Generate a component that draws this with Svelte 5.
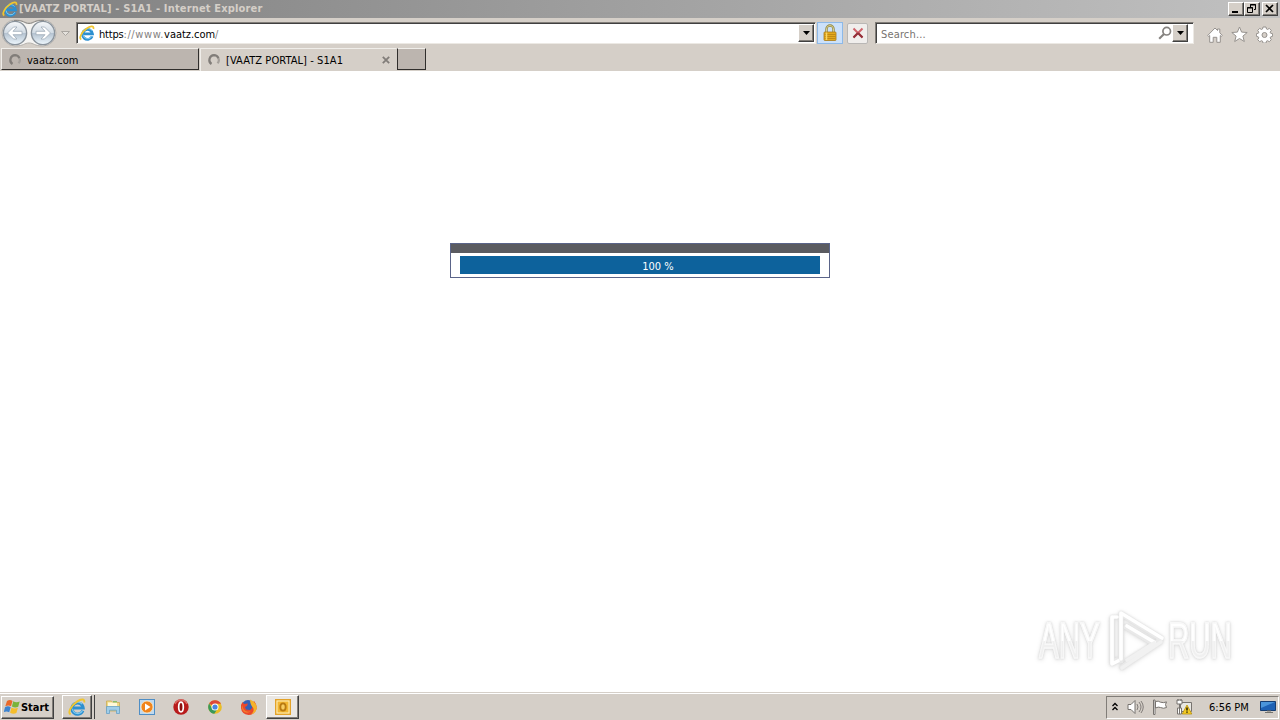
<script>
  const url = "https://www.vaatz.com/";
  const progress = 100;
  const time = "6:56 PM";
</script>

{#snippet ieLogo(size)}
  <svg class="ie" width={size} height={size} viewBox="0 0 16 16">
    <path d="M13.2 11.2A5 5 0 1 1 13.5 8.800H4.800" fill="none" stroke="#2c8fd0" stroke-width="2.700" />
    <path d="M12.900 11.200A4.700 4.700 0 0 1 4 9.500M4.500 6.500a4.700 4.700 0 0 1 8-1" fill="none" stroke="#7fc9ee" stroke-width="1" />
    <path d="M2.300 14.600C-.7 13 3 6.600 8 3.200c3.600-2.500 7.200-2.600 6.400.8" fill="none" stroke="#f0c52f" stroke-width="1.700" />
  </svg>
{/snippet}

{#snippet spinner()}
  <svg class="spinner" width="14" height="14" viewBox="0 0 14 14">
    <path d="M11 4.500A4.800 4.800 0 0 1 10.500 10.300" fill="none" stroke="#a5a09b" stroke-width="2.200" />
    <path d="M4.500 11A4.800 4.800 0 0 1 7 2.200a4.800 4.800 0 0 1 4.400 2.900" fill="none" stroke="#817d79" stroke-width="2.200" />
  </svg>
{/snippet}

{#snippet arrow()}
  <svg width="7" height="4" viewBox="0 0 7 4"><path d="M0 0h7L3.5 4z" fill="#000" /></svg>
{/snippet}

<div class="screen">
  <header class="titlebar">
    {@render ieLogo(16)}
    <span class="title">[VAATZ PORTAL] - S1A1 - Internet Explorer</span>
    <div class="controls">
      <button class="raised" aria-label="Minimize">
        <svg width="12" height="10" viewBox="0 0 12 10"><path d="M2 8h6" stroke="#000" stroke-width="2" /></svg>
      </button>
      <button class="raised" aria-label="Restore">
        <svg width="12" height="10" viewBox="0 0 12 10" fill="none" stroke="#000">
          <path d="M4.5 3V.5h5v5H8M4 1h6M1.5 3.5h5v5h-5zM1 4h6" />
        </svg>
      </button>
      <button class="raised close" aria-label="Close">
        <svg width="12" height="10" viewBox="0 0 12 10"><path d="M2 1l7 7M9 1L2 8" stroke="#000" stroke-width="1.7" /></svg>
      </button>
    </div>
  </header>

  <nav class="toolbar">
    <svg class="history" width="76" height="30" viewBox="0 0 76 30">
      <defs>
        <linearGradient id="orb" x1="0" y1="0" x2="0" y2="1">
          <stop offset="0" stop-color="#f6f8fa" />
          <stop offset=".48" stop-color="#d2dbe4" />
          <stop offset=".52" stop-color="#b5c3d1" />
          <stop offset="1" stop-color="#eef7fd" />
        </linearGradient>
      </defs>
      <path d="M15 2C24 2 24 5 29 5s5-3 14-3a13 13 0 0 1 0 26c-9 0-9-3-14-3s-5 3-14 3A13 13 0 0 1 15 2" fill="#f5f4f2" stroke="#b5b1ac" />
      <path d="M14 2.500C24 2 24 5.500 29 5.500s5-3.500 15-3" fill="none" stroke="#8f8c88" />
      <circle cx="15" cy="15" r="11.6" fill="url(#orb)" stroke="#8a939c" stroke-width="1.4" />
      <circle cx="43" cy="15" r="11.6" fill="url(#orb)" stroke="#8a939c" stroke-width="1.4" />
      <g fill="#fff" stroke="#9eabb8" stroke-width=".8">
        <path d="M7.5 15l6-6h3.5l-4 4.3H22v3.4h-9l4 4.3h-3.5z" />
        <path d="M50.5 15l-6-6H41l4 4.3h-9v3.4h9L41 21h3.5z" />
      </g>
      <path d="M61.5 13.5h8l-4 4z" fill="#e5e2dd" stroke="#aaa6a1" />
    </svg>

    <div class="field address">
      {@render ieLogo(16)}
      <span class="url">
        <span class="scheme">https</span><span class="dim">{url.slice(5, 12)}</span><span class="host">{url.slice(12, -1)}</span><span class="dim">/</span>
      </span>
      <button class="raised drop" aria-label="Show address history">{@render arrow()}</button>
    </div>

    <button class="lock" aria-label="Security report">
      <svg width="16" height="18" viewBox="0 0 16 18">
        <path d="M4.5 8V5a3.5 3.5 0 0 1 7 0v3" fill="none" stroke="#8f8643" stroke-width="2.4" />
        <path d="M4.5 8V5a3.5 3.5 0 0 1 7 0v3" fill="none" stroke="#dfd698" stroke-width=".9" />
        <rect x="2" y="8" width="12" height="8.5" rx=".8" fill="#e4a91c" stroke="#a87a17" stroke-width=".8" />
        <path d="M2.5 10.5h11M2.5 12.5h11M2.5 14.5h11" stroke="#b88313" stroke-width=".8" />
        <path d="M4.5 8.5v7.5" stroke="#f9d765" stroke-width="1.5" />
      </svg>
    </button>
    <button class="stop" aria-label="Stop">
      <svg width="12" height="12" viewBox="0 0 12 12" fill="none">
        <path d="M1.5 1.5l9 9M10.5 1.5l-9 9" stroke="#d0646b" stroke-width="2" />
        <path d="M6 6l4.5 4.5M6 6l-4.5 4.5" stroke="#93303a" stroke-width="2" />
      </svg>
    </button>

    <div class="field search">
      <span class="placeholder">Search...</span>
      <svg width="14" height="14" viewBox="0 0 14 14" fill="none" stroke="#85827f">
        <circle cx="8.7" cy="5.2" r="3.8" stroke-width="1.7" />
        <path d="M6 8l-4.8 4.8" stroke-width="2.1" />
      </svg>
      <button class="raised drop" aria-label="Search options">{@render arrow()}</button>
    </div>

    <div class="tools">
      <svg width="16" height="16" viewBox="0 0 16 16" fill="#fff" stroke="#96928e">
        <path d="M.7 8.5L8 1l2.5 2.5V2h2.3v3.8l2.5 2.7-1 .9-1-.9v6.8H9.8v-5H6.2v5H2.7V8.5l-1 .9z" />
      </svg>
      <svg width="17" height="17" viewBox="0 0 17 17" fill="#fff" stroke="#96928e">
        <path d="M8.5 1l2.1 5.1 5.6.4-4.3 3.6 1.4 5.4-4.8-3-4.8 3 1.4-5.4L.8 6.5l5.6-.4z" />
      </svg>
      <svg width="17" height="17" viewBox="0 0 17 17" fill="#fff" stroke="#96928e">
        <path d="M7 1h3l.5 2 1 .5 1.8-1.1 2 2-1.1 1.8.4 1 2 .5v2.6l-2 .6-.4 1 1.1 1.8-2 2-1.8-1-1 .4-.5 2H7l-.5-2-1-.4-1.8 1-2-2 1.1-1.8-.4-1-2-.6V7.7l2-.5.4-1-1.1-1.8 2-2 1.8 1.1 1-.5z" />
        <circle cx="8.5" cy="9" r="2.5" fill="#d5cfc8" />
      </svg>
    </div>
  </nav>

  <div class="tabs">
    <div class="tab idle">{@render spinner()}<span class="tab-one">vaatz.com</span></div>
    <div class="tab active">
      {@render spinner()}
      <span class="tab-two">[VAATZ PORTAL] - S1A1</span>
      <svg class="tab-close" width="8" height="8" viewBox="0 0 8 8"><path d="M.8.8l6.4 6.4M7.2.8L.8 7.2" stroke="#817d79" stroke-width="1.8" /></svg>
    </div>
    <button class="tab new" aria-label="New tab"></button>
  </div>

  <main class="page">
    <div class="loader">
      <div class="loader-head"></div>
      <div class="track">
        <div class="bar" style="width:{progress}%"><span>{progress} %</span></div>
      </div>
    </div>

    <div class="watermark">
      <span class="any">ANY</span>
      <svg width="60" height="64" viewBox="0 0 60 64" fill="none" stroke-linejoin="round" stroke-linecap="round">
        <g stroke="#e9e9e9" stroke-width="5">
          <path d="M5 10v44l5-3M14 52V5l40 25-39 28" /><path d="M19 18l28 17" />
        </g>
        <g stroke="#fff" stroke-width="3.6">
          <path d="M10 8H5v47l6-3" /><path d="M14 50V4l41 25" /><path d="M20 17l27 16" />
        </g>
        <path d="M54 33L15 59M47 34L20 51" stroke="#f1f1f1" stroke-width="3.6" />
      </svg>
      <span class="run">RUN</span>
    </div>
  </main>

  <footer class="taskbar">
    <button class="raised start">
      <svg width="17" height="16" viewBox="0 0 17 16">
        <path d="M3 2q3-2 5.5 0L7 7.3Q4.500 5.500 1.300 7.300z" fill="#e9682a" />
        <path d="M9.300 2.300q3 1.700 6.400.2l-1.500 5.300q-3 1.500-6.300-.2z" fill="#79b33a" />
        <path d="M1 8.200q3-1.700 5.700 0L5.200 13.300Q2.700 11.700-.2 13z" fill="#3c83d0" />
        <path d="M7.500 8.500q3 1.700 6.400.2L12.400 14q-3 1.500-6.300-.2z" fill="#f5bd2b" />
      </svg>
      <span>Start</span>
    </button>

    <div class="apps">
      <div class="app group"><div class="raised slot">{@render ieLogo(18)}</div></div>
      <div class="app">
        <svg width="16" height="16" viewBox="0 0 16 16">
          <path d="M1.500 2h5l1 1.500h7V12h-13z" fill="#efd984" stroke="#c8a74b" stroke-width=".7" />
          <path d="M3 3.500h9v4H3z" fill="#fff8d8" />
          <path d="M8 2.800h4" stroke="#66b449" />
          <path d="M1.500 7.500h13v7h-3v-3.300h-7v3.300h-3z" fill="#9fcde9" stroke="#5b9bc6" stroke-width=".7" />
        </svg>
      </div>
      <div class="app">
        <svg width="16" height="16" viewBox="0 0 16 16">
          <rect x=".5" y=".5" width="15" height="15" fill="#c0d9ee" stroke="#4f8ec5" />
          <circle cx="8" cy="8" r="6" fill="#f0841c" stroke="#fff0cc" stroke-width=".7" />
          <path d="M6 4.500L11.500 8 6 11.500z" fill="#fff" />
        </svg>
      </div>
      <div class="app">
        <svg width="16" height="16" viewBox="0 0 16 16">
          <circle cx="8" cy="8" r="7.700" fill="#b81b1b" />
          <path d="M2 5a6.500 6.500 0 0 1 12 0" fill="none" stroke="#d96a62" stroke-width="1.500" />
          <ellipse cx="8" cy="8" rx="2.300" ry="4.800" fill="#8c1010" stroke="#fff" stroke-width="1.700" />
        </svg>
      </div>
      <div class="app">
        <svg width="16" height="16" viewBox="0 0 16 16">
          <circle cx="8" cy="8" r="6.800" fill="#e9bd25" />
          <path d="M8 8L2.100 4.600A6.800 6.800 0 0 1 14 4.800H8z" fill="#dc4639" />
          <path d="M2.100 4.600A6.800 6.800 0 0 0 7.300 14.800L10.700 9.500 5 9z" fill="#39995a" />
          <circle cx="8" cy="8" r="3.500" fill="#fff" />
          <circle cx="8" cy="8" r="2.600" fill="#4885e0" />
        </svg>
      </div>
      <div class="app">
        <svg width="18" height="17" viewBox="0 0 18 17">
          <circle cx="8" cy="7.500" r="6.500" fill="#3461b7" />
          <path d="M1 6l1.500-3L4 5l4-.5L7 7l-2 1 1 2.500 4 .5 2-2V5l2-3q3.500 4 2.500 8-2 6-8 6-7-1-7.500-7z" fill="#e9482b" />
          <path d="M10 .5q6 2 7 8-1 6-6 7 4-3 2-7-3-3-3-8" fill="#f4b32c" />
          <path d="M2 6l1.500 4Q6 14 11 12q-3 3-7 1-3-3-2-7" fill="#f47b2a" />
        </svg>
      </div>
      <div class="app raised office">
        <svg width="16" height="16" viewBox="0 0 16 16">
          <rect x=".7" y=".7" width="14.600" height="14.600" fill="#fff0b8" stroke="#e3a229" stroke-width="1.400" />
          <path d="M2.500 2.500h11v11h-11z" fill="#f2b632" />
          <ellipse cx="8" cy="8" rx="2.700" ry="3.600" fill="#f7cc60" stroke="#b87a12" stroke-width="1.800" />
        </svg>
      </div>
    </div>

    <div class="tray">
      <svg width="8" height="10" viewBox="0 0 8 10" fill="none" stroke="#000" stroke-width="1.300"><path d="M1.500 4L4 1.500 6.500 4M1.500 8L4 5.500 6.500 8" /></svg>
      <svg width="17" height="16" viewBox="0 0 17 16" fill="#fff" stroke="#77736f">
        <path d="M1 5.500h3l4-4v13l-4-4H1z" />
        <path d="M10 5q2 3 0 6M12 3q4 5 0 10M14 2q4.500 6 0 12" fill="none" stroke-width=".9" />
      </svg>
      <svg width="16" height="16" viewBox="0 0 16 16" fill="#fff" stroke="#77736f">
        <path d="M1.500 1h1.500v14.500H1.500zM3.500 2.500q3-1 5 .7 3 1 6-.3-2 2.600 0 5.600-3 1.500-6 0-2-1-5 .5z" />
      </svg>
      <svg width="17" height="16" viewBox="0 0 17 16">
        <path d="M4.500 3.500h11v9h-11z" fill="#e8e7e2" stroke="#77736f" />
        <path d="M1 1h5v4H1zM3.500 5v10M1.500 9h4v6h-4zM2 0v2M5 0v2" fill="#fff" stroke="#77736f" />
        <path d="M11 6l4.800 9H6.200z" fill="#f4cc24" stroke="#b78f0b" stroke-width=".8" />
        <path d="M11 8.500v3M11 12.500v1.300" stroke="#000" stroke-width="1.300" />
      </svg>
      <span class="clock">{time}</span>
      <svg width="16" height="14" viewBox="0 0 16 14">
        <path d="M.5 1.500h15v9H.5z" fill="#1e61b4" stroke="#163d71" />
        <path d="M1 2h14L1 8z" fill="#4b95da" />
        <path d="M5 12.500h8M7 11h4" stroke="#75746f" />
      </svg>
    </div>
  </footer>
</div>

<style>
:global(body) {
  margin: 0;
  overflow: hidden;
}

.screen {
  width: 1280px;
  height: 720px;
  display: flex;
  flex-direction: column;
  background: #d5cfc8;
  font: 11px/14px "DejaVu Sans Condensed", "DejaVu Sans", sans-serif;
  font-stretch: condensed;
  color: #000;
  white-space: nowrap;
}

svg {
  display: block;
  flex-shrink: 0;
}

button {
  box-sizing: border-box;
  padding: 0;
  font: inherit;
  color: inherit;
  display: flex;
  align-items: center;
  justify-content: center;
}

.raised {
  border: 1px solid;
  border-color: #fff #404040 #404040 #fff;
  background: #d5cfc8;
  box-shadow: inset -1px -1px #817d78;
}

/* title bar */
.titlebar {
  height: 18px;
  display: flex;
  align-items: center;
  padding: 0 2px;
  gap: 1px;
  background: linear-gradient(90deg, #808080, #c1c1c1);
}

.title {
  color: #d5cfc8;
  font-size: 11px;
  font-weight: bold;
  letter-spacing: 0.16px;
}

.controls {
  display: flex;
  margin-left: auto;
}

.controls .raised {
  width: 16px;
  height: 14px;
}

.controls .close {
  margin-left: 2px;
}

/* address row */
.toolbar {
  height: 30px;
  display: flex;
  align-items: center;
}

.field {
  box-sizing: border-box;
  height: 22px;
  display: flex;
  align-items: center;
  background: #fff;
  border: 1px solid;
  border-color: #817d78 #ece9e4 #ece9e4 #817d78;
  box-shadow: inset 1px 1px #404040;
}

.address {
  width: 740px;
  padding: 0 1px 0 2px;
}

.url {
  display: flex;
  padding-top: 3px;
  margin-left: 4px;
}

.scheme { letter-spacing: -0.2px; }
.dim { color: #85827f; letter-spacing: 0.6px; }
.host { letter-spacing: -0.05px; }

.drop {
  width: 16px;
  height: 18px;
}

.address .drop {
  margin-left: auto;
}

.lock {
  width: 26px;
  height: 22px;
  margin-left: 1px;
  border: 1px solid #8db9e8;
  background: #cce1fa;
}

.stop {
  width: 21px;
  height: 21px;
  margin-left: 4px;
  border: 1px solid #b9b7b5;
  border-radius: 2px;
  background: #f0eeec;
}

.search {
  width: 319px;
  margin-left: 7px;
  padding: 0 5px 0 5px;
}

.placeholder {
  padding-top: 3px;
  margin-right: auto;
  color: #77736f;
  letter-spacing: 0.15px;
}

.tools {
  display: flex;
  align-items: center;
  gap: 8px;
  margin: 3px 0 0 13px;
}

/* tabs */
.tabs {
  height: 23px;
  display: flex;
  align-items: flex-start;
  padding-left: 1px;
}

.tab {
  box-sizing: border-box;
  width: 198px;
  height: 22px;
  display: flex;
  align-items: center;
  padding-left: 6px;
  border: 1px solid;
  border-color: #f0eeea #302e2c #302e2c #f0eeea;
  background: #bcb5af;
}

.tab span {
  margin-left: 5px;
}

.tab.idle {
  padding-top: 2px;
}

.tab-one {
  padding-top: 1px;
}

.tab-two {
  padding-top: 1px;
  letter-spacing: 0.07px;
}

.tab.active {
  width: 197px;
  height: 23px;
  margin-left: 1px;
  border-bottom: none;
  border-right-color: #d5cfc8;
  background: #d5cfc8;
}

.tab-close {
  margin: 0 6px 0 auto;
}

.tab.new {
  width: 29px;
  border-left-color: #302e2c;
}

/* page */
.page {
  position: relative;
  flex: 1;
  background: #fff;
}

.loader {
  box-sizing: border-box;
  width: 380px;
  height: 35px;
  margin: 172px auto 0;
  border: 1px solid #5a6489;
}

.loader-head {
  height: 9px;
  background: #5a5b60;
}

.track {
  padding: 3px 9px;
}

.bar {
  height: 18px;
  display: flex;
  align-items: center;
  justify-content: center;
  background: #0d629c;
  color: #fff;
}

.bar span {
  padding: 3px 0 0 36px;
}

.watermark {
  position: absolute;
  left: 1039px;
  top: 538px;
  display: flex;
  align-items: center;
  font: 50px/64px "Liberation Sans", sans-serif;
  color: #fff;
  filter: drop-shadow(0 0 1px #d4d4d4) drop-shadow(0 1px 2px #e8e8e8);
}

.watermark span {
  transform: scaleX(0.59);
  transform-origin: left;
  background: linear-gradient(#fff 50%, #f0f0f0 50%);
  background-clip: text;
  color: transparent;
  -webkit-text-stroke: 1.5px #f8f8f8;
}

.watermark .any {
  width: 104px;
  margin-right: -36px;
}

.watermark .run {
  width: 110px;
  margin-left: 1px;
}

/* taskbar */
.taskbar {
  height: 26px;
  display: flex;
  align-items: center;
  border-top: 1px solid #fff;
  box-shadow: 0 -1px #d5cfc8;
  position: relative;
}

.start {
  width: 53px;
  height: 23px;
  margin-left: 1px;
  gap: 0;
  font-weight: bold;
}

.start svg {
  margin-left: -2px;
}

.start span {
  padding-top: 1px;
}

.apps {
  display: flex;
  align-items: center;
  margin-left: 8px;
}

.app {
  box-sizing: border-box;
  width: 34px;
  height: 24px;
  display: flex;
  align-items: center;
  justify-content: center;
}

.group {
  width: 33px;
  margin-right: 1px;
  justify-content: flex-start;
  border-right: 1px solid #404040;
}

.slot {
  box-sizing: border-box;
  width: 30px;
  height: 24px;
  display: flex;
  align-items: center;
  justify-content: center;
}

.office {
  width: 33px;
  background: #eae7e3;
}

.tray {
  box-sizing: border-box;
  width: 173px;
  height: 23px;
  display: flex;
  align-items: center;
  margin: 0 1px 0 auto;
  padding-left: 4px;
  gap: 8px;
  border: 1px solid;
  border-color: #817d78 #fff #fff #817d78;
}

.clock {
  padding-top: 1px;
  margin: 0 3px 0 8px;
}
</style>
